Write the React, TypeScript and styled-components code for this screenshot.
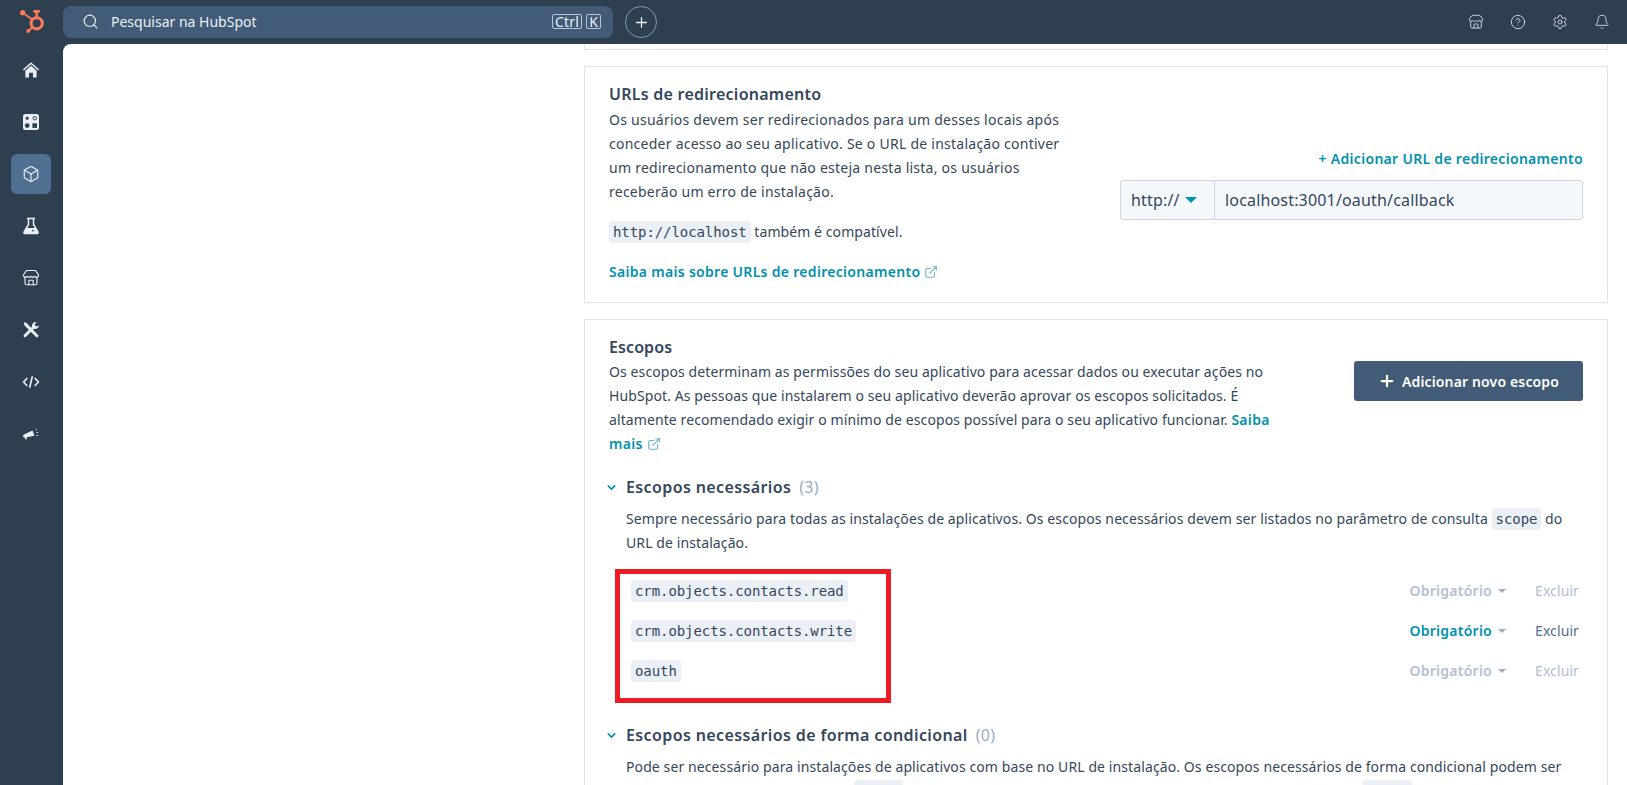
import * as React from 'react';
import { FC, ReactNode } from "react";
import styled, { createGlobalStyle } from "styled-components";
import { Search, Plus, Store, CircleHelp, Settings, Bell, Box, ExternalLink, ChevronDown } from "lucide-react";

const GlobalStyle = createGlobalStyle`
    html, body {
        margin: 0;
        padding: 0;
        height: 100%;
        overflow: hidden;
        background: #fff;
    }
    * {
        box-sizing: border-box;
    }
`

const Logo = () => (
    <svg width="44" height="44" viewBox="0 0 44 44" fill="none">
        <circle cx="26.7" cy="23.3" r="5.6" stroke="#ff7a59" strokeWidth="3" />
        <path d="M26.7 17V12" stroke="#ff7a59" strokeWidth="2.4" />
        <path d="M24.6 11.4h4.2" stroke="#ff7a59" strokeWidth="2.6" strokeLinecap="round" />
        <path d="M12.7 12.7L22.5 19.5" stroke="#ff7a59" strokeWidth="1.8" />
        <circle cx="12.7" cy="12.7" r="2.6" fill="#ff7a59" />
        <path d="M18.3 31L22.8 27" stroke="#ff7a59" strokeWidth="2" />
        <circle cx="18.3" cy="31" r="2" fill="#ff7a59" />
    </svg>
)

const HomeIcon = () => (
    <svg width="18" height="18" viewBox="0 0 18 18" fill="#eaf0f6">
        <path d="M9 1.2L.9 8.6l1 1L9 3.2l7.1 6.4 1-1z" />
        <path d="M3.4 9.7L9 4.7l5.6 5V16.4h-3.6v-4.6H7v4.6H3.4z" />
    </svg>
)

const GridIcon = () => (
    <svg width="18" height="18" viewBox="0 0 18 18">
        <rect x="1" y="1" width="16" height="16" rx="2.5" fill="#eaf0f6" />
        <path d="M5.2 3.2l2 2-2 2-2-2z" fill="#2e3f50" />
        <circle cx="12.7" cy="5.2" r="1.7" fill="none" stroke="#2e3f50" strokeWidth="1" />
        <circle cx="5.2" cy="12.6" r="2.4" fill="#2e3f50" />
        <rect x="10.4" y="10.3" width="4.6" height="4.6" fill="#2e3f50" />
    </svg>
)

const FlaskIcon = () => (
    <svg width="18" height="18" viewBox="0 0 18 18" fill="none">
        <path d="M5 1.5h8" stroke="#eaf0f6" strokeWidth="1.6" />
        <path d="M6.5 2v5.5L2 15.2c-.3.7.1 1.3.9 1.3h12.2c.8 0 1.2-.6.9-1.3L11.5 7.5V2" stroke="#eaf0f6" strokeWidth="1.5" />
        <path d="M4.6 11h8.8l2.4 5.3H2.2z" fill="#eaf0f6" />
        <circle cx="11" cy="13.6" r=".9" fill="#2e3f50" />
    </svg>
)

const ToolsIcon = () => (
    <svg width="18" height="18" viewBox="0 0 18 18" fill="#eaf0f6">
        <path d="M2.3 1.2L4 1.6l12.7 13.2-1.9 1.9L2.1 3.9z" />
        <path d="M17 4.2a3.8 3.8 0 0 1-5 3.6L4 15.8a1.4 1.4 0 0 1-2-2l8-8a3.8 3.8 0 0 1 4.6-4.6l-2.1 2.2 2.1 2.4z" />
    </svg>
)

const CodeIcon = () => (
    <svg width="18" height="18" viewBox="0 0 18 18" fill="none" stroke="#eaf0f6" strokeWidth="1.6">
        <path d="M5.3 5L1.6 9l3.7 4" />
        <path d="M12.7 5l3.7 4-3.7 4" />
        <path d="M10.4 3.2L7.6 14.8" />
    </svg>
)

const MegaphoneIcon = () => (
    <svg width="18" height="18" viewBox="0 0 18 18" fill="#eaf0f6">
        <path d="M1 10l9.5-4.6 2 5.4-8 1.4.6 1.8-1.6.4-.8-2L1.4 12z" />
        <path d="M13.4 5.2l1-1.4.6.4-1 1.4zM14.2 7.6l1.9-.6.2.7-1.9.6zM14.6 10l1.7.3-.1.7-1.7-.3z" />
    </svg>
)

const railIcons: { key: string; icon: ReactNode; active?: boolean }[] = [
    { key: "home", icon: <HomeIcon /> },
    { key: "grid", icon: <GridIcon /> },
    { key: "box", icon: <Box size={18} strokeWidth={1.5} color="#eaf0f6" />, active: true },
    { key: "flask", icon: <FlaskIcon /> },
    { key: "store", icon: <Store size={18} strokeWidth={1.5} color="#eaf0f6" /> },
    { key: "tools", icon: <ToolsIcon /> },
    { key: "code", icon: <CodeIcon /> },
    { key: "mega", icon: <MegaphoneIcon /> },
];

const scopes = [
    { name: "crm.objects.contacts.read", editable: false },
    { name: "crm.objects.contacts.write", editable: true },
    { name: "oauth", editable: false },
];

const SectionHeading: FC<{ title: string; count: number }> = ({ title, count }) => (
    <SectionHead>
        <ChevronDown size={13} strokeWidth={3} color="#0091ae" />
        <SectionTitle>{title}</SectionTitle>
        <Count>({count})</Count>
    </SectionHead>
)

export default function App() {
    return (
        <Page>
            <GlobalStyle />
            <TopBar>
                <LogoCell><Logo /></LogoCell>
                <SearchBox>
                    <Search size={17} strokeWidth={1.6} color="#eaf0f6" />
                    <SearchText>Pesquisar na HubSpot</SearchText>
                    <Key>Ctrl</Key>
                    <Key>K</Key>
                </SearchBox>
                <RoundButton><Plus size={17} strokeWidth={1.8} color="#eaf0f6" /></RoundButton>
                <TopActions>
                    <Store size={16} strokeWidth={1.3} color="#dfe6ee" />
                    <CircleHelp size={16} strokeWidth={1.3} color="#dfe6ee" />
                    <Settings size={16} strokeWidth={1.3} color="#dfe6ee" />
                    <Bell size={16} strokeWidth={1.3} color="#dfe6ee" />
                </TopActions>
            </TopBar>
            <Body>
                <Rail>
                    {railIcons.map(item => (
                        <RailItem key={item.key} $active={item.active}>{item.icon}</RailItem>
                    ))}
                </Rail>
                <Main>
                    <CardStub />
                    <RedirectCard>
                        <RedirectText>
                            <RedirectTitle>URLs de redirecionamento</RedirectTitle>
                            <Text>
                                Os usuários devem ser redirecionados para um desses locais após conceder
                                acesso ao seu aplicativo. Se o URL de instalação contiver um redirecionamento
                                que não esteja nesta lista, os usuários receberão um erro de instalação.
                            </Text>
                            <SpacedText><Code>http://localhost</Code> também é compatível.</SpacedText>
                            <SpacedText>
                                <Link>Saiba mais sobre URLs de redirecionamento</Link>
                                <ExternalIcon size={14} strokeWidth={2} color="#6db3c6" />
                            </SpacedText>
                        </RedirectText>
                        <RedirectForm>
                            <Link>+ Adicionar URL de redirecionamento</Link>
                            <UrlField>
                                <Protocol>http://<Caret $color="#0091ae" $size={6} /></Protocol>
                                <UrlValue>localhost:3001/oauth/callback</UrlValue>
                            </UrlField>
                        </RedirectForm>
                    </RedirectCard>
                    <Card>
                        <ScopesHead>
                            <ScopesIntro>
                                <CardTitle>Escopos</CardTitle>
                                <Text>
                                    Os escopos determinam as permissões do seu aplicativo para acessar dados ou
                                    executar ações no HubSpot. As pessoas que instalarem o seu aplicativo deverão
                                    aprovar os escopos solicitados. É altamente recomendado exigir o mínimo de
                                    escopos possível para o seu aplicativo funcionar. <Link>Saiba mais</Link>
                                    <ExternalIcon size={14} strokeWidth={2} color="#6db3c6" />
                                </Text>
                            </ScopesIntro>
                            <AddButton>
                                <Plus size={18} strokeWidth={3} color="#fff" />
                                Adicionar novo escopo
                            </AddButton>
                        </ScopesHead>

                        <SectionHeading title="Escopos necessários" count={3} />
                        <SectionText>
                            Sempre necessário para todas as instalações de aplicativos. Os escopos necessários
                            devem ser listados no parâmetro de consulta <Code>scope</Code> do URL de instalação.
                        </SectionText>
                        <ScopeList>
                            <Highlight />
                            {scopes.map(scope => (
                                <ScopeRow key={scope.name}>
                                    <ScopeName>{scope.name}</ScopeName>
                                    <ScopeActions>
                                        <Requirement $editable={scope.editable}>
                                            Obrigatório
                                            <Caret $color="#99acc2" $size={4} />
                                        </Requirement>
                                        <Remove $editable={scope.editable}>Excluir</Remove>
                                    </ScopeActions>
                                </ScopeRow>
                            ))}
                        </ScopeList>

                        <ConditionalHead>
                            <SectionHeading title="Escopos necessários de forma condicional" count={0} />
                        </ConditionalHead>
                        <SectionText>
                            Pode ser necessário para instalações de aplicativos com base no URL de instalação.
                            Os escopos necessários de forma condicional podem ser citados no parâmetro de
                            consulta <Code>scope</Code> do URL, quando exigidos na instalação, e adicionados
                            ao parâmetro <Code>scope</Code> do aplicativo.
                        </SectionText>
                    </Card>
                </Main>
            </Body>
        </Page>
    )
}

const sans = `"Noto Sans", "Open Sans", sans-serif`;

const Page = styled.div`
    height: 785px;
    display: flex;
    flex-direction: column;
    overflow: hidden;
    background: #2e3f50;
    font-family: ${sans};
    font-size: 14px;
    line-height: 24px;
    letter-spacing: 0.25px;
    color: #33475b;
`

const TopBar = styled.header`
    height: 44px;
    flex: none;
    display: flex;
    align-items: center;
    letter-spacing: 0;
`

const LogoCell = styled.div`
    width: 53px;
    height: 44px;
    margin-left: 10px;
    flex: none;
`

const SearchBox = styled.div`
    width: 550px;
    height: 32px;
    margin-top: -1px;
    display: flex;
    align-items: center;
    padding: 0 12px 0 19px;
    gap: 4px;
    background: #425b76;
    border-radius: 8px;
    color: #eaf0f6;
`

const SearchText = styled.span`
    flex: 1;
    margin-left: 8px;
    font-size: 14px;
`

const Key = styled.span`
    height: 15px;
    padding: 0 2px;
    border: 1px solid #b7c6d6;
    border-radius: 2px;
    font-size: 14px;
    line-height: 13px;
    letter-spacing: 0.2px;
`

const RoundButton = styled.div`
    width: 32px;
    height: 32px;
    margin-left: 12px;
    display: flex;
    align-items: center;
    justify-content: center;
    border: 1px solid #7c98b6;
    border-radius: 50%;
`

const TopActions = styled.div`
    margin-left: auto;
    padding-right: 17px;
    display: flex;
    gap: 26px;
`

const Body = styled.div`
    flex: 1;
    min-height: 0;
    display: flex;
`

const Rail = styled.nav`
    width: 63px;
    flex: none;
    padding: 6px 0 0 11px;
    display: flex;
    flex-direction: column;
    gap: 12px;
`

const RailItem = styled.div<{ $active?: boolean }>`
    width: 40px;
    height: 40px;
    display: flex;
    align-items: center;
    justify-content: center;
    border-radius: 6px;
    background: ${p => p.$active ? "#516f90" : "transparent"};
`

const Main = styled.main`
    flex: 1;
    min-width: 0;
    padding: 0 19px 0 521px;
    display: flex;
    flex-direction: column;
    gap: 16px;
    overflow: hidden;
    background: #fff;
    border-top-left-radius: 8px;
`

const Card = styled.section`
    flex: none;
    padding: 17px 24px 18px;
    border: 1px solid #dfe3eb;
`

const CardStub = styled(Card)`
    height: 6px;
    padding: 0;
    border-top: 0;
`

const RedirectCard = styled(Card)`
    display: flex;
    align-items: center;
    justify-content: space-between;
`

const RedirectText = styled.div`
    width: 460px;
`

const RedirectForm = styled.div`
    width: 463px;
    display: flex;
    flex-direction: column;
    align-items: flex-end;
    gap: 11px;
    line-height: 20px;
`

const CardTitle = styled.h3`
    margin: 0 0 3px;
    font-size: 16px;
    font-weight: 600;
    line-height: 20px;
`

const RedirectTitle = styled(CardTitle)`
    margin-bottom: 4px;
`

const Text = styled.p`
    margin: 0;
    font-weight: 400;
`

const SpacedText = styled(Text)`
    margin-top: 16px;
    letter-spacing: 0.08px;
`

const Code = styled.code`
    padding: 3px 4px;
    border-radius: 3px;
    background: #eaf0f6;
    font-family: "DejaVu Sans Mono", "Liberation Mono", monospace;
    font-size: 14px;
    letter-spacing: -0.08px;
    color: #33475b;
`

const ScopeName = styled(Code)`
    display: block;
    line-height: 16px;
`

const Link = styled.a`
    font-weight: 600;
    letter-spacing: 0.3px;
    color: #0091ae;
    cursor: pointer;
`

const ExternalIcon = styled(ExternalLink)`
    margin-left: 4px;
    vertical-align: -2px;
`

const UrlField = styled.div`
    width: 100%;
    height: 40px;
    display: flex;
    border: 1px solid #cbd6e2;
    border-radius: 3px;
    background: #f5f8fa;
    font-size: 16px;
    line-height: 38px;
    letter-spacing: 0.17px;
`

const Protocol = styled.div`
    width: 94px;
    padding-left: 10px;
    border-right: 1px solid #cbd6e2;
    display: flex;
    align-items: center;
    gap: 5px;
`

const UrlValue = styled.div`
    padding-left: 10px;
`

const Caret = styled.span<{ $color: string; $size: number }>`
    width: 0;
    height: 0;
    border-left: ${p => p.$size}px solid transparent;
    border-right: ${p => p.$size}px solid transparent;
    border-top: ${p => p.$size}px solid ${p => p.$color};
`

const ScopesHead = styled.div`
    display: flex;
    justify-content: space-between;
    align-items: flex-start;
`

const ScopesIntro = styled.div`
    width: 680px;
    letter-spacing: 0.1px;
`

const AddButton = styled.button`
    width: 229px;
    height: 40px;
    margin-top: 24px;
    display: flex;
    align-items: center;
    justify-content: center;
    gap: 6px;
    border: 0;
    border-radius: 3px;
    background: #425b76;
    color: #fff;
    font-family: ${sans};
    font-size: 14px;
    font-weight: 600;
    letter-spacing: 0.15px;
`

const SectionHead = styled.div`
    display: flex;
    align-items: center;
    height: 20px;
    margin: 21px 0 0 -4px;
`

const SectionTitle = styled.h4`
    margin: 0 0 0 8px;
    font-size: 16px;
    font-weight: 600;
    line-height: 20px;
    letter-spacing: 0.38px;
`

const Count = styled.span`
    margin-left: 8px;
    font-size: 16px;
    color: #99acc2;
`

const SectionText = styled.p`
    margin: 10px 0 0;
    padding-left: 17px;
    letter-spacing: 0.1px;
`

const ScopeList = styled.div`
    position: relative;
    margin: 16px 0 0 17px;
`

const Highlight = styled.div`
    position: absolute;
    left: -11px;
    top: -2px;
    width: 276px;
    height: 134px;
    border: 5px solid #ed1c24;
    pointer-events: none;
`

const ScopeRow = styled.div`
    height: 40px;
    padding: 0 4px 0 5px;
    display: flex;
    align-items: center;
    justify-content: space-between;
`

const ScopeActions = styled.div`
    display: flex;
    align-items: center;
`

const Requirement = styled.div<{ $editable: boolean }>`
    display: flex;
    align-items: center;
    gap: 6px;
    font-weight: 600;
    color: ${p => p.$editable ? "#0091ae" : "#b0c1d4"};
`

const Remove = styled.div<{ $editable: boolean }>`
    margin-left: 29px;
    letter-spacing: 0.1px;
    color: ${p => p.$editable ? "#516f90" : "#b0c1d4"};
`

const ConditionalHead = styled.div`
    margin-top: 34px;
`
